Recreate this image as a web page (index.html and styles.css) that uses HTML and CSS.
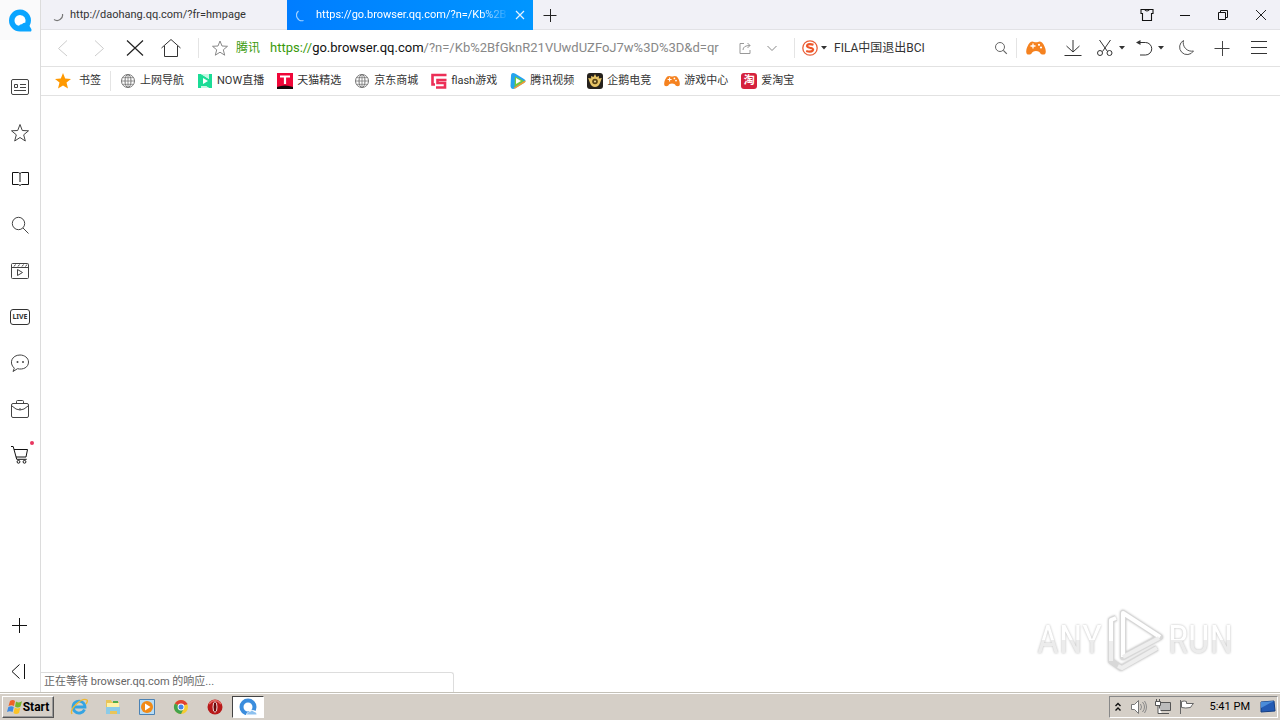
FILE: index.html
```html
<!DOCTYPE html>
<html lang="zh-CN">
<head>
<meta charset="utf-8">
<title>QQ Browser</title>
<link rel="stylesheet" href="styles.css">
</head>
<body>
<svg class="defs" width="0" height="0" aria-hidden="true">
  <symbol id="globe" viewBox="0 0 16 16"><g fill="none" stroke="#777"><circle cx="8" cy="8" r="6.5"/><ellipse cx="8" cy="8" rx="3" ry="6.5"/><path d="M8 1.500v13M1.500 8h13M2.500 4.700h11M2.500 11.300h11" stroke-width=".8"/></g></symbol>
  <symbol id="pad" viewBox="0 0 20 16"><path d="M4 2.500Q6 1 8 2q2 .6 4 0 2-1 4 .5c2 2 3.800 6 3.800 9 0 3.500-2.500 3.500-5 2.500-.8-2-2.500-3-4.800-3s-4 1-4.800 3c-2.500 1-5 1-5-2.500 0-3 1.800-7 3.800-9z" fill="#f58220"/><path d="M7 3.500v5M4.500 6h5" stroke="#fff" stroke-width="1.300"/><circle cx="13" cy="4.800" r="1.100" fill="#fff"/><circle cx="15" cy="7.500" r="1.100" fill="#fff"/></symbol>
  <symbol id="caret" viewBox="0 0 6 4"><path d="M0 0h6L3 3.500z" fill="#333"/></symbol>
</svg>
<div class="app">
  <nav class="side">
    <div class="logo"><svg width="26" height="26" viewBox="0 0 26 26"><path d="M13 2.500a11 11 0 1 0 0 22h11q1-1.500 0-3l-1.500-2.500A11 11 0 0 0 13 2.500z" fill="#0aa5ff"/><path d="M13 8a5.500 5.500 0 0 0-5.500 6q.5 4 4.500 4.800 1-2 3-1.500 1-2 3.300-1.500Q19.500 8.500 13 8z" fill="#fff"/></svg></div>
    <div class="side-list">
      <button aria-label="新闻"><svg width="20" height="20" viewBox="0 0 20 20"><rect x="1.500" y="2.500" width="17" height="15" rx="1.500"/><path d="M4.500 7.500h3v3h-3zM10 7.500h6M10 10.500h6M4 13.500h12"/></svg></button>
      <button aria-label="收藏"><svg width="20" height="20" viewBox="0 0 20 20"><path d="M10 1.500l2.300 6 6.200.3-4.800 4 1.600 6.200-5.300-3.500L4.700 18l1.600-6.200-4.800-4 6.200-.3z"/></svg></button>
      <button aria-label="阅读"><svg width="20" height="20" viewBox="0 0 20 20"><path class="dark" d="M10 4.500L8.500 3.500h-6v12h6l1.500 1 1.500-1h7v-12h-7L10 4.500V13"/></svg></button>
      <button aria-label="搜索"><svg width="20" height="20" viewBox="0 0 20 20"><circle cx="8.500" cy="8.500" r="6.200"/><path d="M13 13l5.500 5.500"/></svg></button>
      <button aria-label="视频"><svg width="20" height="20" viewBox="0 0 20 20"><rect x="1.500" y="2.500" width="17" height="15" rx="1"/><path d="M2 6.500h16M4 5.500l1.500-2M8 5.500l1.500-2M12 5.500l1.500-2M15.500 5.500l1.500-2M7.500 8.500v6l5-3z"/></svg></button>
      <button aria-label="直播"><span class="live">LIVE</span></button>
      <button aria-label="聊天"><svg width="20" height="20" viewBox="0 0 20 20"><path d="M3 18.500l1.300-3.300C-1.500 10 2 2 10 2c4.500 0 8.500 3 8.500 7 0 5.500-5.500 8-11 6.700z"/><circle class="fill" cx="7.500" cy="9" r="1"/><circle class="fill" cx="13" cy="9" r="1"/></svg></button>
      <button aria-label="工具"><svg width="20" height="20" viewBox="0 0 20 20"><rect x="1.500" y="4.500" width="17" height="14" rx="1.500"/><path d="M6.500 4V2.500q0-1 1-1h5q1 0 1 1V4M2 7q8 8 16 0M10 9v2"/></svg></button>
      <button class="shop" aria-label="购物"><svg width="20" height="20" viewBox="0 0 20 20"><path class="dark" d="M1 1.500h2.200l3.500 12.800h10M4 4.500h13.500l-1.500 7.500H6"/><circle class="dark" cx="8.500" cy="16.800" r="1.400"/><circle class="dark" cx="14.500" cy="16.800" r="1.400"/></svg><i class="dot"></i></button>
    </div>
    <div class="side-list side-end">
      <button aria-label="添加"><svg width="20" height="20" viewBox="0 0 20 20"><path class="dark" d="M2 10.500h15M9.500 3v15"/></svg></button>
      <button aria-label="收起"><svg width="20" height="20" viewBox="0 0 20 20"><path class="dark" d="M9.500 3.500L2 10.500l7.500 7M14.500 3v15"/></svg></button>
    </div>
  </nav>
  <div class="browser">
    <header class="tabs">
      <div class="tab"><svg width="14" height="14" viewBox="0 0 14 14"><path d="M12.500 6A5.500 5.500 0 0 1 4 11.500" fill="none" stroke="#777" stroke-width="1.200"/></svg><span class="tab-title">http://daohang.qq.com/?fr=hmpage</span></div>
      <div class="tab active"><svg width="14" height="14" viewBox="0 0 14 14"><path d="M2.500 3A5.500 5.500 0 0 0 7.500 12.500" fill="none" stroke="#9fd0ff" stroke-width="1.200"/></svg><span class="tab-title">https://go.browser.qq.com/?n=/Kb%2B</span><button class="tab-close" aria-label="关闭标签"><svg width="10" height="10" viewBox="0 0 10 10"><path d="M1 1l8 8M9 1L1 9" stroke="#e4f2ff" stroke-width="1.200"/></svg></button></div>
      <button class="new-tab" aria-label="新标签"><svg width="14" height="14" viewBox="0 0 14 14"><path d="M.5 7.500h13M7.500 1v13" stroke="#222"/></svg></button>
      <div class="window-tools">
        <button aria-label="皮肤"><svg width="14" height="14" viewBox="0 0 14 14"><path d="M1 1.500h3.500q2.500 3 5 0H13v4h-1.500v7h-9v-7H1zM4.500 1.500h5" fill="none" stroke="#111" stroke-width="1.100"/></svg></button>
        <button aria-label="最小化"><svg width="12" height="12" viewBox="0 0 12 12"><path d="M1 6.500h10" stroke="#111"/></svg></button>
        <button aria-label="还原"><svg width="12" height="12" viewBox="0 0 12 12"><path d="M1.500 3.500h7v7h-7zM3.500 3.500v-2h7v7h-2" fill="none" stroke="#111"/></svg></button>
        <button aria-label="关闭"><svg width="12" height="12" viewBox="0 0 12 12"><path d="M1 1l10 10M11 1L1 11" stroke="#222"/></svg></button>
      </div>
    </header>
    <div class="toolbar">
      <div class="nav">
        <button aria-label="后退"><svg width="20" height="20" viewBox="0 0 20 20"><path d="M14 2.500L5.500 10.500 14 18" stroke="#ccc"/></svg></button>
        <button aria-label="前进"><svg width="20" height="20" viewBox="0 0 20 20"><path d="M6 2.500l8.500 8L6 18" stroke="#ccc"/></svg></button>
        <button aria-label="停止"><svg width="20" height="20" viewBox="0 0 20 20"><path d="M2 2.500l16 15M18 2.500l-16 15" stroke="#222" stroke-width="1.200"/></svg></button>
        <button aria-label="主页"><svg width="20" height="20" viewBox="0 0 20 20"><path d="M.5 10L10 1.500l9.500 8.500M3.500 8v10.500h13V8" stroke="#333"/></svg></button>
      </div>
      <i class="sep"></i>
      <button class="mark" aria-label="加入书签"><svg width="18" height="18" viewBox="0 0 18 18"><path d="M9 2l2 5 5.500.3-4.200 3.500 1.400 5.400L9 13.200l-4.700 3 1.400-5.400L1.500 7.300 7 7z" stroke="#888"/></svg></button>
      <span class="owner">腾讯</span>
      <span class="url" role="textbox" aria-label="地址"><span class="scheme">https://</span><span class="host">go.browser.qq.com</span>/?n=/Kb%2BfGknR21VUwdUZFoJ7w%3D%3D&amp;d=qr</span>
      <button class="share" aria-label="分享"><svg width="12" height="12" viewBox="0 0 12 12"><path d="M5 1.500H1v10h10V8M4 8q0-4.500 7-4.500M8.500 1L11 3.500 8.500 6" stroke="#999"/></svg></button>
      <button class="expand" aria-label="展开"><svg width="12" height="12" viewBox="0 0 12 12"><path d="M1.500 4L6 8.500 10.500 4" stroke="#888"/></svg></button>
      <i class="sep"></i>
      <button class="engine" aria-label="搜索引擎"><svg width="16" height="16" viewBox="0 0 16 16"><circle cx="8" cy="8" r="7.200" stroke="#e9603a" stroke-width="1.300"/><path d="M11.500 4.800Q7 3.200 5.300 5c-1 1.500.5 2.300 2.700 2.800 2.500.5 3.800 1.200 2.800 2.700Q9 12.500 4.200 11" stroke="#ee5527" stroke-width="2.200"/></svg><svg width="6" height="4"><use href="#caret"/></svg></button>
      <input class="search" type="text" aria-label="搜索" value="FILA中国退出BCI">
      <button class="find" aria-label="查找"><svg width="14" height="14" viewBox="0 0 14 14"><circle cx="6" cy="6" r="4.500" stroke="#666"/><path d="M9.300 9.300l3.500 3.500" stroke="#666" stroke-width="1.200"/></svg></button>
      <i class="sep"></i>
      <button class="tool" aria-label="游戏"><svg width="20" height="16"><use href="#pad"/></svg></button>
      <button class="tool" aria-label="下载"><svg width="18" height="18" viewBox="0 0 18 18"><path d="M9 1v12M2.500 7L9 13l6.500-6M.5 16.500h17" stroke="#333"/></svg></button>
      <button class="tool with-caret" aria-label="截图"><svg width="18" height="18" viewBox="0 0 18 18"><path d="M3.500 1l8 11.500M14.500 1l-8 11.500" stroke="#333"/><circle cx="4" cy="14" r="2.500" stroke="#333"/><circle cx="13.500" cy="14" r="2.500" stroke="#333"/></svg><svg width="6" height="4"><use href="#caret"/></svg></button>
      <button class="tool with-caret" aria-label="撤销"><svg width="18" height="18" viewBox="0 0 18 18"><path d="M2 3.500h8.500a6 6 0 0 1 0 12.500H5" stroke="#333"/><path d="M1 3.500L5.500 1v5z" fill="#333"/></svg><svg width="6" height="4"><use href="#caret"/></svg></button>
      <button class="tool moon" aria-label="夜间模式"><svg width="18" height="18" viewBox="0 0 18 18"><path d="M6.500 1.500A7.500 7.500 0 1 0 16.500 12 8.500 8.500 0 0 1 6.500 1.500z" stroke="#555"/></svg></button>
      <button class="tool" aria-label="更多扩展"><svg width="16" height="16" viewBox="0 0 16 16"><path d="M.5 8.500h15M8.500 1v15" stroke="#444"/></svg></button>
      <button class="tool" aria-label="菜单"><svg width="16" height="16" viewBox="0 0 16 16"><path d="M0 1.500h16M0 7.500h16M0 13.500h16" stroke="#333"/></svg></button>
    </div>
    <nav class="bookmarks">
      <a class="first" href="#"><svg width="16" height="16" viewBox="0 0 16 16"><path d="M8 0l2.200 5.500 5.800.4-4.500 3.700 1.500 6L8 12.400l-5 3.200 1.500-6L0 5.900l5.800-.4z" fill="#f90"/></svg>书签</a>
      <i class="sep"></i>
      <a href="#"><svg width="16" height="16"><use href="#globe"/></svg>上网导航</a>
      <a href="#"><svg width="16" height="16" viewBox="0 0 16 16"><path d="M1 1h3l8 5V1h3v14h-3L4 10v5H1z" fill="#1bdc96"/><path d="M4 1l8 5V1z" fill="#c4f7e2"/><path d="M4 10v5h8z" fill="#c4f7e2"/><path d="M3 3l10 7v3L3 13z" fill="#1bdc96"/><path d="M6 5l5 3-5 3z" fill="#fff"/></svg>NOW直播</a>
      <a href="#"><svg width="16" height="16" viewBox="0 0 16 16"><path d="M0 0h16v16H0z" fill="#f00638"/><path d="M0 14q8-3 16 0v2H0z" fill="#16080a"/><path d="M3 3.500h10M8 3.500V11" stroke="#fff" stroke-width="2.200"/></svg>天猫精选</a>
      <a href="#"><svg width="16" height="16"><use href="#globe"/></svg>京东商城</a>
      <a href="#"><svg width="16" height="16" viewBox="0 0 16 16"><path d="M15.500 2H1.500v9.500H4M15.500 7H6.500v3H14v4.500H5" fill="none" stroke="#ec2f57" stroke-width="2.600"/></svg>flash游戏</a>
      <a href="#"><svg width="16" height="16" viewBox="0 0 16 16"><path d="M1 3q0-4 4-2.500L14 6q3 2 0 4l-9 5.500Q1 17 .5 13z" fill="#25a4ee"/><path d="M3.500 15L14 8l1.500-.5q.5 1.500-1.500 2.500l-8 5q-1.500 1-2.500 0z" fill="#ff9a28"/><path d="M5 3.500l9 4.500-9.500 6z" fill="#74ca37"/><path d="M6 5l5 3-5 3z" fill="#fff"/></svg>腾讯视频</a>
      <a href="#"><svg width="16" height="16" viewBox="0 0 16 16"><rect width="16" height="16" rx="3" fill="#25211c"/><path d="M8 1l1.500 3L12 3l-.2 2.500 3-.5L13 10q-1.500 4-5 4t-5-4L1.200 5l3 .5L4 3l2.500 1z" fill="#e7c465"/><circle cx="8" cy="8.500" r="2.800" fill="#594417"/><circle cx="8" cy="8.500" r="1" fill="#f8e29e"/></svg>企鹅电竞</a>
      <a href="#"><svg width="16" height="16"><use href="#pad"/></svg>游戏中心</a>
      <a href="#"><span class="tao">淘</span>爱淘宝</a>
    </nav>
    <main class="page">
      <div class="watermark"><span>ANY</span><svg width="58" height="62" viewBox="0 0 58 62"><g fill="none" stroke="#d8d8d8" stroke-width="6" stroke-linejoin="round"><path d="M17 4v44l37-20z"/><path d="M10 9L5 11v41l10 7 36-20"/></g><g fill="none" stroke="#fff" stroke-width="4" stroke-linejoin="round"><path d="M17 48V4l37 24"/><path d="M10 9L5 11v21"/></g><path d="M17 48l36-19M5 32v20M12 57l4 2 35-20" fill="none" stroke="#eee" stroke-width="4"/></svg><span>RUN</span></div>
      <div class="status">正在等待 browser.qq.com 的响应...</div>
    </main>
  </div>
</div>
<footer class="taskbar">
  <button class="start"><svg width="16" height="16" viewBox="0 0 16 16"><path d="M3 2q3-2 5 0L7 7Q4.500 5.500 1.500 7z" fill="#ef6327"/><path d="M9 2.500q3 2 6-.2L13.500 7.500q-3 2-5.500 0z" fill="#75b72b"/><path d="M1.300 8q3-1.500 5.500 0L5.500 13Q3 11.500 0 13z" fill="#3f8be2"/><path d="M7.800 8.500q2.500 2 5.500 0L12 14q-3 1.800-5.500 0z" fill="#fbc325"/></svg>Start</button>
  <div class="apps">
    <button aria-label="Internet Explorer"><svg width="18" height="18" viewBox="0 0 18 18"><path d="M14.500 11.500A6 6 0 1 1 15 9H4" fill="none" stroke="#35a4e2" stroke-width="2.800"/><path d="M2 16C-1 11 12-1 17 2q1 1-1 4" fill="none" stroke="#efb832" stroke-width="1.400"/></svg></button>
    <button aria-label="Explorer"><svg width="18" height="18" viewBox="0 0 18 18"><path d="M2 2h5l1 2h7v12H2z" fill="#e9c559"/><path d="M3 5h12v7H3z" fill="#fff2a6"/><path d="M2 9h14v7h-3v-3H6v3H2z" fill="#8bcbe8"/><path d="M9 4h5" stroke="#4fab4a" stroke-width="2"/></svg></button>
    <button aria-label="Media Player"><svg width="18" height="18" viewBox="0 0 18 18"><path d="M1.500 1.500h15v15h-15z" fill="#b7dcf5" stroke="#4b82b4"/><circle cx="9" cy="9" r="6" fill="#f18a16"/><path d="M7 5.500v7l5.500-3.500z" fill="#fff"/></svg></button>
    <button aria-label="Chrome"><svg width="16" height="16" viewBox="0 0 16 16"><circle cx="8" cy="8" r="7" fill="#f5cc32"/><path d="M8 8L1.900 4.500a7 7 0 0 1 12.200 0z" fill="#df4132"/><path d="M8 8L1.900 4.500A7 7 0 0 0 8 15l2-4z" fill="#43a34c"/><path d="M8 4.800h6.200" stroke="#df4132" stroke-width="1.500"/><circle cx="8" cy="8" r="3.400" fill="#fff"/><circle cx="8" cy="8" r="2.500" fill="#4285e8"/></svg></button>
    <button aria-label="Opera"><svg width="18" height="18" viewBox="0 0 18 18"><circle cx="9" cy="9" r="7.500" fill="#b81919"/><path d="M3 6q6-7 12 0" fill="none" stroke="#e56a63" stroke-width="1.500"/><ellipse cx="9" cy="9" rx="2" ry="5.300" fill="#6a0a0a" stroke="#f5dede"/></svg></button>
    <button class="pressed" aria-label="QQ Browser"><svg width="18" height="18" viewBox="0 0 18 18"><circle cx="9" cy="9" r="6.500" fill="#fff" stroke="#3b8ddd" stroke-width="4"/><path d="M7 18q0-4 3-4 1-3 4-2 3 0 4 4v2z" fill="#fff"/><path d="M8 16.500q0-3 3-2.500 2-3 4 0 2.500 0 2.500 2.500z" fill="#8dc1ef"/></svg></button>
  </div>
  <div class="tray">
    <button class="more" aria-label="Show hidden icons"><svg width="8" height="12" viewBox="0 0 8 12"><path d="M1.500 5L4 2.500 6.500 5M1.500 9.500L4 7l2.500 2.500" fill="none" stroke="#111" stroke-width="1.400"/></svg></button>
    <svg width="18" height="16" viewBox="0 0 18 16"><path d="M1.500 5.500h3l4-4v13l-4-4h-3z" fill="#fff" stroke="#777"/><path d="M10.500 5q2 3 0 6M12.500 3q4 5 0 10M14.500 2q4 6 0 12" fill="none" stroke="#888"/></svg>
    <svg width="18" height="16" viewBox="0 0 18 16"><path d="M5.500 3.500h11v8h-11zM8 14.500h7" fill="#bbb" stroke="#555"/><path d="M1.500 2.500h5v4h-5zM4 6.500v8h4M2.500 0v2M5.500 0v2" fill="#fff" stroke="#555"/></svg>
    <svg width="18" height="16" viewBox="0 0 18 16"><path d="M2.500 1v14M3.500 2.500q3-1 5 0v2h7q-2 2-3 4-5 1-9 0z" fill="#fff" stroke="#666"/></svg>
    <time>5:41 PM</time>
    <svg class="desk" width="16" height="14" viewBox="0 0 16 14"><path d="M1 2l13-1 1 10-14 1z" fill="#245bb4" stroke="#153e81"/><path d="M1 2l13-1-13 7z" fill="#4b8cd9"/></svg>
  </div>
</footer>
</body>
</html>
```

FILE: styles.css
```css
* { box-sizing: border-box; }
body {
  margin: 0;
  height: 100vh;
  display: flex;
  flex-direction: column;
  background: #fff;
  color: #333;
  font: 11px/16px Roboto, "Noto Sans CJK SC", sans-serif;
}
button { padding: 0; border: 0; background: none; font: inherit; color: inherit; display: flex; align-items: center; justify-content: center; }
svg { display: block; flex: none; }
.defs { position: absolute; }
.app { flex: 1; display: flex; min-height: 0; }

.side { flex: none; width: 41px; border-right: 1px solid #dcdcdc; display: flex; flex-direction: column; }
.logo { height: 40px; display: flex; align-items: center; justify-content: center; background: #fafafb; }
.side-list { display: flex; flex-direction: column; gap: 6px; padding-top: 27px; }
.side-list button { width: 40px; height: 40px; }
.side-list path, .side-list rect, .side-list circle { fill: none; stroke: #444; }
.side-list .dark { stroke: #111; }
.side-list .fill { fill: #444; stroke: none; }
.side-end { margin-top: auto; padding: 0 0 1px; }
.live { width: 20px; height: 16px; border: 1px solid #333; border-radius: 3px; font: bold 7px/14px "Noto Sans", sans-serif; text-align: center; }
.shop { position: relative; }
.dot { position: absolute; top: 6px; right: 6px; width: 4px; height: 4px; border-radius: 50%; background: #e8365f; }

.browser { flex: 1; min-width: 0; display: flex; flex-direction: column; }
.tabs { flex: none; height: 30px; display: flex; background: #f1f1f7; border-bottom: 1px solid #e2e2e6; }
.tab { width: 246px; height: 30px; display: flex; align-items: center; gap: 6px; padding: 0 8px 0 9px; }
.tab.active { background: linear-gradient(90deg, #007dff, #0096ff); color: #fff; }
.tab-title { flex: 1; white-space: nowrap; }
.active .tab-title { -webkit-mask-image: linear-gradient(90deg, #000 85%, transparent); mask-image: linear-gradient(90deg, #000 85%, transparent); }
.new-tab { width: 34px; }
.window-tools { margin-left: auto; display: flex; }
.window-tools button { width: 38px; }

.toolbar { flex: none; height: 37px; display: flex; align-items: center; border-bottom: 1px solid #e2e2e2; padding-left: 4px; padding-right: 3px; }
.toolbar svg { fill: none; }
.nav { display: flex; margin-right: 9px; }
.nav button { width: 36px; height: 36px; }
.sep { flex: none; width: 1px; height: 20px; background: #e4e4e4; }
.mark { margin: 0 7px 0 12px; }
.owner { flex: none; font-size: 12px; color: #3a9a0c; margin-right: 10px; }
.url { flex: 1; min-width: 0; white-space: nowrap; font-size: 13px; line-height: 20px; color: #888; }
.scheme { color: #3a9a0c; }
.host { color: #111; }
.share { margin-right: 15px; }
.expand { margin-right: 16px; }
.engine { margin-left: 7px; gap: 3px; }
.search { width: 160px; padding: 0; margin-left: 7px; border: 0; outline: 0; background: none; font: inherit; font-size: 12px; color: #333; }
.find { margin-right: 8px; }
.tool { width: 37px; height: 36px; }
.with-caret { width: 39px; gap: 5px; }
.moon { width: 34px; }

.bookmarks { flex: none; height: 29px; display: flex; align-items: center; gap: 13px; border-bottom: 1px solid #e2e2e2; padding-left: 14px; }
.bookmarks a { flex: none; display: flex; align-items: center; gap: 4px; color: #333; text-decoration: none; }
.bookmarks .first { gap: 8px; }
.bookmarks .sep { margin: 0 -4px; }
.tao { width: 16px; height: 16px; border-radius: 3px; background: #d5213d; color: #fff; font-weight: bold; text-align: center; }

.page { flex: 1; position: relative; }
.status { position: absolute; left: 0; bottom: 0; width: 413px; height: 20px; padding: 1px 3px; border: 1px solid #ddd; border-width: 1px 1px 0 0; border-radius: 0 3px 0 0; color: #666; background: #fff; }
.watermark { position: absolute; right: 47px; bottom: 21px; display: flex; align-items: center; gap: 4px; font: 38px/62px "Liberation Sans Narrow", "Roboto Condensed", "Liberation Sans", sans-serif; filter: drop-shadow(0 0 1px #bbb); }
.watermark span { color: transparent; background: linear-gradient(#fff 50%, #ececec 50%); -webkit-background-clip: text; background-clip: text; }

.taskbar { flex: none; height: 28px; display: flex; align-items: center; padding: 1px 2px 0; background: #d5cfc7; border-top: 1px solid #c4c1b8; box-shadow: inset 0 1px #fff; color: #000; }
.start { width: 52px; height: 22px; border: 1px solid; border-color: #fff #555 #555 #fff; box-shadow: inset -1px -1px #999; font-weight: bold; font-size: 12px; }
.apps { display: flex; padding-left: 8px; }
.apps button { width: 34px; height: 22px; }
.apps .pressed { width: 32px; background: #fff; border: 1px solid; border-color: #444 #fff #fff #444; }
.tray { margin-left: auto; height: 22px; display: flex; align-items: center; gap: 6px; padding: 0 1px 0 4px; border: 1px solid; border-color: #888 #fff #fff #888; }
.more { margin-right: 2px; }
.tray time { margin: 0 4px 0 8px; }
```
